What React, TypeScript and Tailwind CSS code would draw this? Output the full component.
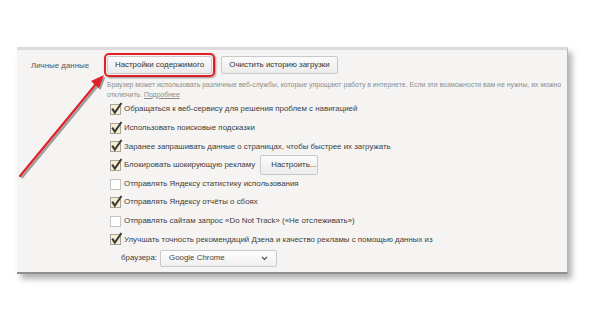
import type { ReactNode } from "react";

const Box = ({ checked }: { checked: boolean }) => (
  <svg width="14" height="14" viewBox="0 0 14 14" className="shrink-0">
    <rect
      x="0.5"
      y="2.5"
      width="10"
      height="10"
      fill={checked ? "#f7eed2" : "#ffffff"}
      stroke={checked ? "#a8a49a" : "#c4c4c4"}
    />
    {checked && (
      <path
        d="M2.2 6.6 L4.8 10.6 L11.5 1"
        stroke="#3b3a36"
        strokeWidth="2"
        fill="none"
      />
    )}
  </svg>
);

const Row = ({ checked, children }: { checked: boolean; children: ReactNode }) => (
  <div className="flex h-[18.6px] items-center pl-[6px]">
    <Box checked={checked} />
    <div className="flex items-center whitespace-nowrap">{children}</div>
  </div>
);

const Btn = ({ children, className = "" }: { children: ReactNode; className?: string }) => (
  <div
    className={
      "flex h-[18px] items-center whitespace-nowrap rounded-[2px] border border-[#c9c9c9] bg-gradient-to-b from-[#fbfbfb] to-[#ececec] px-[10px] text-[#333] " +
      className
    }
  >
    {children}
  </div>
);

export default function App() {
  return (
    <div className="relative h-[323px] w-[600px] overflow-hidden bg-white font-['Liberation_Sans',sans-serif] text-[7.9px] text-[#3d3d3d]">
      <div className="ml-[17px] mt-[47px] h-[227px] w-[551px] border-t-[3px] border-r border-b-[2px] border-t-[#dcdcdc] border-r-[#b5b5b5] border-b-[#8f8f8f] bg-[#f5f4f2] shadow-[4px_5px_6px_rgba(0,0,0,0.3)]">
        <div className="flex">
          <div className="w-[87px] shrink-0 whitespace-nowrap pl-[14px] pt-[10px] text-[#555]">Личные данные</div>
          <div className="min-w-0 flex-1">
            <div className="mt-[3px] flex items-center">
              <div className="rounded-[5px] border-2 border-[#e01f26] p-[1px] shadow-[1px_1px_2px_rgba(0,0,0,0.4)]">
                <Btn className="w-[105px] justify-center">Настройки содержимого</Btn>
              </div>
              <Btn className="ml-[6px] w-[117px] justify-center">Очистить историю загрузки</Btn>
            </div>
            <div className="mt-[3px] pl-[3px] text-[6.9px] leading-[9.5px] text-[#8c8c8c]">
              <div className="whitespace-nowrap">
                Браузер может использовать различные веб-службы, которые упрощают работу в интернете. Если эти возможности вам не нужны, их можно
              </div>
              <div>
                отключить. <span className="underline">Подробнее</span>
              </div>
            </div>
            <div className="mt-[1px]">
              <Row checked>Обращаться к веб-сервису для решения проблем с навигацией</Row>
              <Row checked>Использовать поисковые подсказки</Row>
              <Row checked>Заранее запрашивать данные о страницах, чтобы быстрее их загружать</Row>
              <Row checked>
                Блокировать шокирующую рекламу
                <Btn className="ml-[5px] h-[20px] w-[58px] px-[7px]">Настроить...</Btn>
              </Row>
              <Row checked={false}>Отправлять Яндексу статистику использования</Row>
              <Row checked>Отправлять Яндексу отчёты о сбоях</Row>
              <Row checked={false}>Отправлять сайтам запрос «Do Not Track» («Не отслеживать»)</Row>
              <Row checked>Улучшать точность рекомендаций Дзена и качество рекламы с помощью данных из</Row>
              <div className="flex h-[18.6px] items-center pl-[17px]">
                <span className="mr-[3px]">браузера:</span>
                <div className="flex h-[17px] w-[117px] items-center justify-between rounded-[2px] border border-[#c9c9c9] bg-gradient-to-b from-[#fdfdfd] to-[#f0f0f0] pl-[8px] pr-[8px] text-[#444]">
                  <span>Google Chrome</span>
                  <svg width="7" height="5" viewBox="0 0 7 5">
                    <path d="M1 1 L3.5 3.5 L6 1" stroke="#555" strokeWidth="1.2" fill="none" />
                  </svg>
                </div>
              </div>
            </div>
          </div>
        </div>
      </div>
      <svg className="absolute left-0 top-0" width="600" height="323" viewBox="0 0 600 323">
        <g transform="translate(1.5,2)" opacity="0.35">
          <line x1="20" y1="176" x2="96" y2="84" stroke="#000" strokeWidth="2.5" />
          <polygon points="104,75 91,81 99,88" fill="#000" />
        </g>
        <line x1="20" y1="176" x2="96" y2="84" stroke="#e0222a" strokeWidth="2.2" strokeLinecap="round" />
        <polygon points="104,75 91,81 99,88" fill="#e0222a" />
      </svg>
    </div>
  );
}
